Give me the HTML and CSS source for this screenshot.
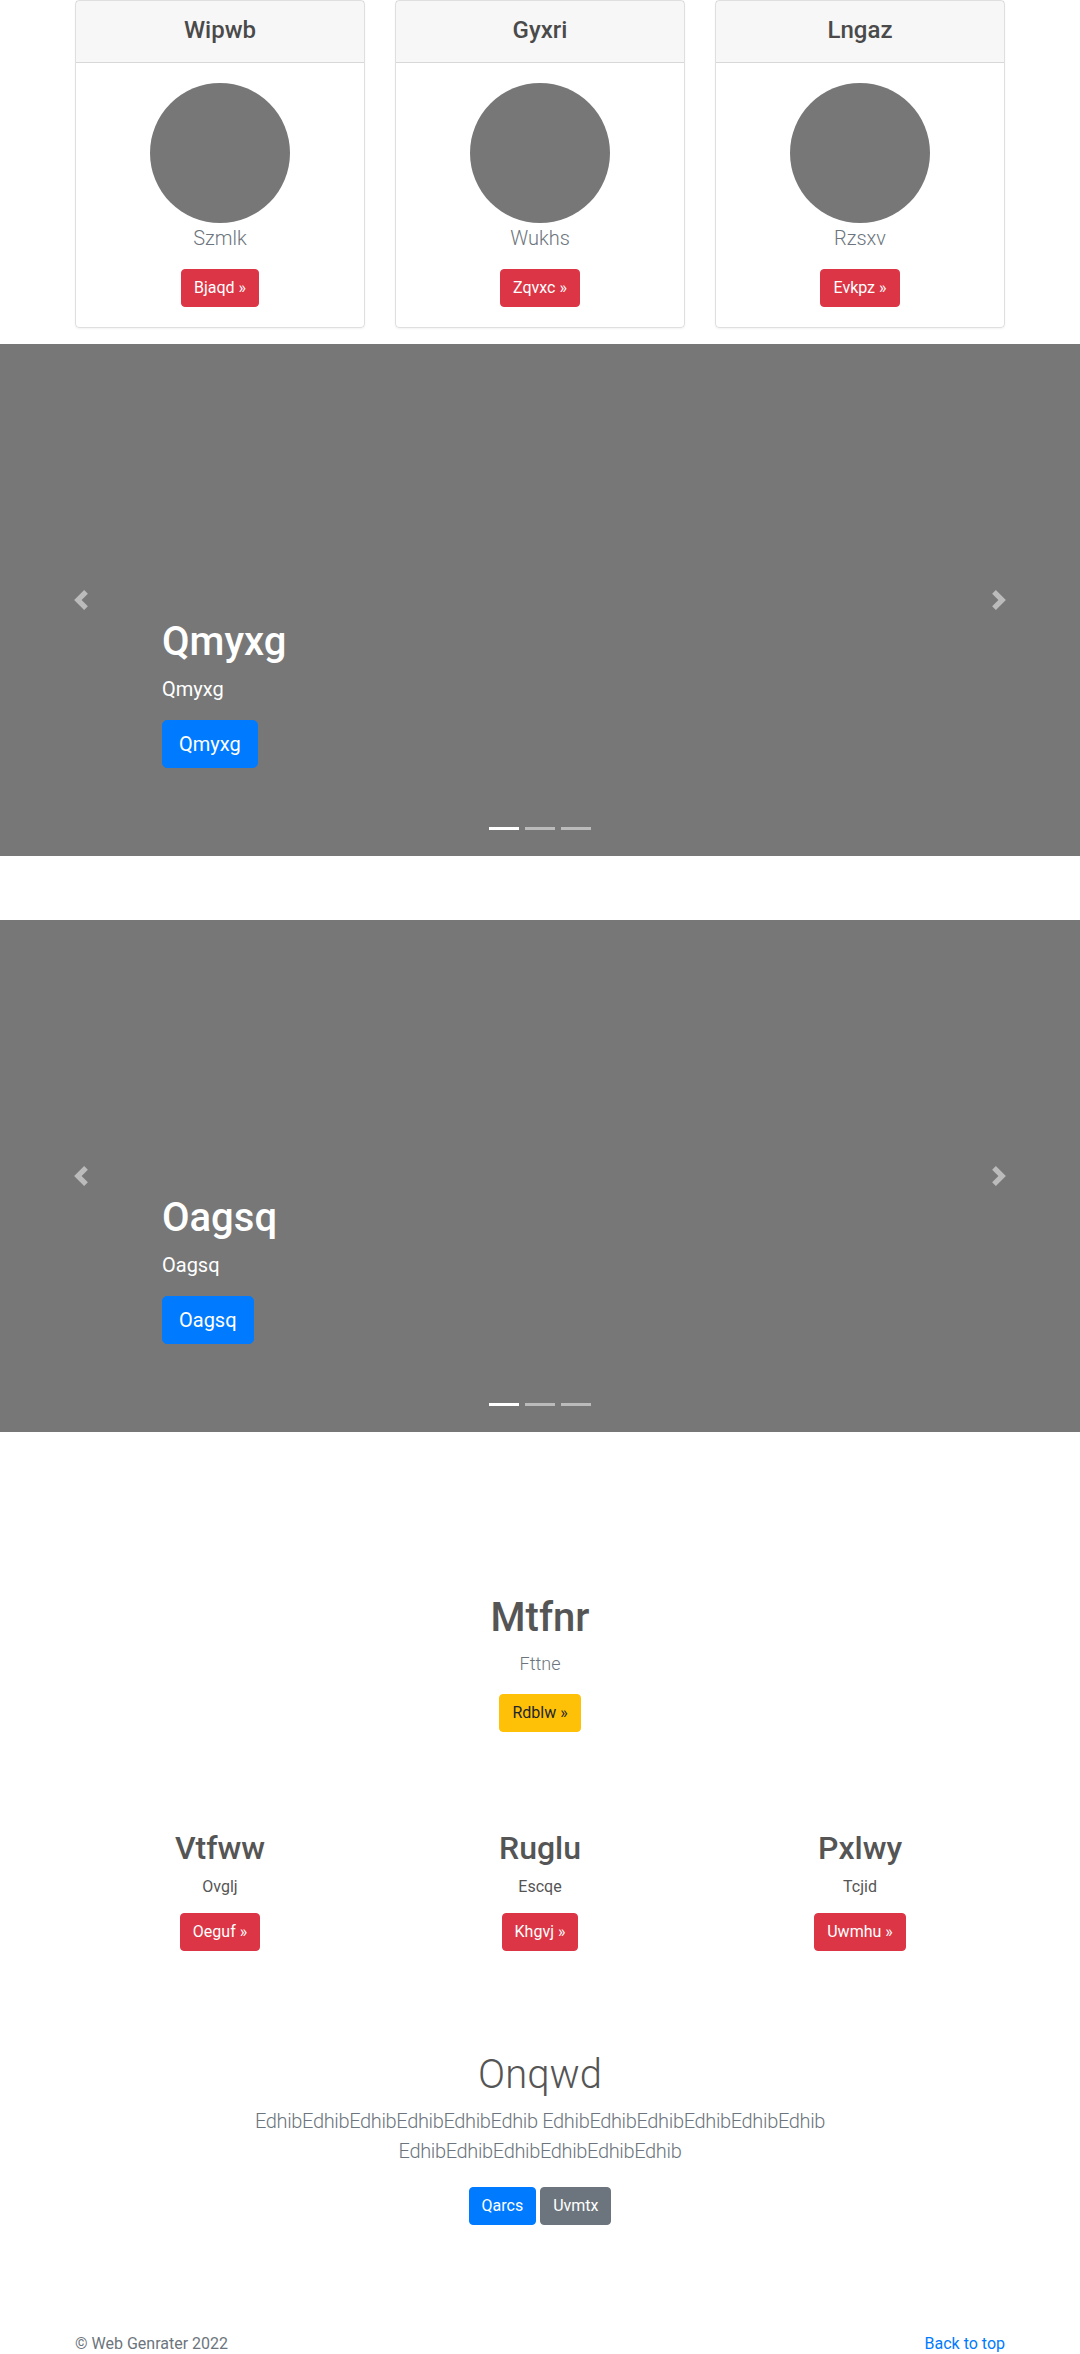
FILE: index.html
```html
<!DOCTYPE html>
<html lang="en">
<head>
<meta charset="utf-8">
<title>Page</title>
<link rel="stylesheet" href="styles.css">
</head>
<body>
<main>
  <div class="container">
    <div class="card-row">
      <div class="card">
        <div class="card-header"><h4 class="card-title">Wipwb</h4></div>
        <div class="card-body">
          <div class="avatar"></div>
          <p class="card-text">Szmlk</p>
          <a class="btn btn-danger" href="#">Bjaqd »</a>
        </div>
      </div>
      <div class="card">
        <div class="card-header"><h4 class="card-title">Gyxri</h4></div>
        <div class="card-body">
          <div class="avatar"></div>
          <p class="card-text">Wukhs</p>
          <a class="btn btn-danger" href="#">Zqvxc »</a>
        </div>
      </div>
      <div class="card">
        <div class="card-header"><h4 class="card-title">Lngaz</h4></div>
        <div class="card-body">
          <div class="avatar"></div>
          <p class="card-text">Rzsxv</p>
          <a class="btn btn-danger" href="#">Evkpz »</a>
        </div>
      </div>
    </div>
  </div>

  <section class="carousel">
    <div class="control">
      <svg viewBox="0 0 8 8" width="20" height="20"><path fill="#fff" d="M5.25 0l-4 4 4 4 1.5-1.5L4.25 4l2.5-2.5L5.25 0z"/></svg>
    </div>
    <div class="caption">
      <h1 class="caption-title">Qmyxg</h1>
      <p class="caption-text">Qmyxg</p>
      <p class="caption-action"><a class="btn btn-lg btn-primary" href="#">Qmyxg</a></p>
    </div>
    <div class="control">
      <svg viewBox="0 0 8 8" width="20" height="20"><path fill="#fff" d="M2.75 0l-1.5 1.5L3.75 4l-2.5 2.5L2.75 8l4-4-4-4z"/></svg>
    </div>
    <ol class="indicators"><li class="active"></li><li></li><li></li></ol>
  </section>

  <section class="carousel">
    <div class="control">
      <svg viewBox="0 0 8 8" width="20" height="20"><path fill="#fff" d="M5.25 0l-4 4 4 4 1.5-1.5L4.25 4l2.5-2.5L5.25 0z"/></svg>
    </div>
    <div class="caption">
      <h1 class="caption-title">Oagsq</h1>
      <p class="caption-text">Oagsq</p>
      <p class="caption-action"><a class="btn btn-lg btn-primary" href="#">Oagsq</a></p>
    </div>
    <div class="control">
      <svg viewBox="0 0 8 8" width="20" height="20"><path fill="#fff" d="M2.75 0l-1.5 1.5L3.75 4l-2.5 2.5L2.75 8l4-4-4-4z"/></svg>
    </div>
    <ol class="indicators"><li class="active"></li><li></li><li></li></ol>
  </section>

  <section class="hero">
    <h1 class="hero-title">Mtfnr</h1>
    <p class="hero-text">Fttne</p>
    <a class="btn btn-warning" href="#">Rdblw »</a>
  </section>

  <section class="container features">
    <div class="feature">
      <h2 class="feature-title">Vtfww</h2>
      <p class="feature-text">Ovglj</p>
      <a class="btn btn-danger" href="#">Oeguf »</a>
    </div>
    <div class="feature">
      <h2 class="feature-title">Ruglu</h2>
      <p class="feature-text">Escqe</p>
      <a class="btn btn-danger" href="#">Khgvj »</a>
    </div>
    <div class="feature">
      <h2 class="feature-title">Pxlwy</h2>
      <p class="feature-text">Tcjid</p>
      <a class="btn btn-danger" href="#">Uwmhu »</a>
    </div>
  </section>

  <section class="jumbo">
    <h1 class="jumbo-title">Onqwd</h1>
    <p class="jumbo-lead">EdhibEdhibEdhibEdhibEdhibEdhib EdhibEdhibEdhibEdhibEdhibEdhib EdhibEdhibEdhibEdhibEdhibEdhib</p>
    <div class="jumbo-actions">
      <a class="btn btn-primary" href="#">Qarcs</a>
      <a class="btn btn-secondary" href="#">Uvmtx</a>
    </div>
  </section>
</main>

<footer class="container footer">
  <p class="footer-copy">© Web Genrater 2022</p>
  <a class="footer-link" href="#">Back to top</a>
</footer>
</body>
</html>
```

FILE: styles.css
```css
* { box-sizing: border-box; }

body {
  margin: 0;
  font-family: Roboto, "Liberation Sans", sans-serif;
  font-size: 16px;
  line-height: 1.5;
  color: #555;
  background: #fff;
}

.container {
  width: 960px;
  margin: 0 auto;
  padding: 0 15px;
}

/* Cards */
.card-row {
  display: grid;
  grid-template-columns: repeat(3, 1fr);
  column-gap: 30px;
  padding-bottom: 16px;
}

.card {
  border: 1px solid rgba(0, 0, 0, 0.125);
  border-radius: 4px;
  text-align: center;
  box-shadow: 0 1px 2px rgba(0, 0, 0, 0.05);
}

.card-header {
  background: rgba(0, 0, 0, 0.03);
  border-bottom: 1px solid rgba(0, 0, 0, 0.125);
  padding: 15px 20px 17px;
}

.card-title {
  margin: 0;
  font-size: 24px;
  line-height: 1.2;
  font-weight: 500;
  color: #4a4a4a;
}

.card-body {
  padding: 20px;
  display: flex;
  flex-direction: column;
  align-items: center;
}

.avatar {
  width: 140px;
  height: 140px;
  border-radius: 50%;
  background: #777;
}

.card-text {
  margin: 0 0 16px;
  font-size: 20px;
  line-height: 30px;
  font-weight: 300;
  color: #6c757d;
}

/* Buttons */
.btn {
  display: inline-block;
  font-size: 16px;
  line-height: 24px;
  padding: 6px 12px;
  border: 1px solid transparent;
  border-radius: 4px;
  color: #fff;
  text-decoration: none;
  font-weight: 400;
}

.btn-lg {
  font-size: 20px;
  line-height: 30px;
  padding: 8px 16px;
  border-radius: 5px;
}

.btn-danger { background: #dc3545; border-color: #dc3545; }
.btn-primary { background: #007bff; border-color: #007bff; }
.btn-secondary { background: #6c757d; border-color: #6c757d; }
.btn-warning { background: #ffc107; border-color: #ffc107; color: #212529; }

/* Carousel */
.carousel {
  position: relative;
  height: 512px;
  background: #777;
  margin-bottom: 64px;
  display: grid;
  grid-template-columns: 15% 1fr 15%;
}

.control {
  display: flex;
  align-items: center;
  justify-content: center;
  opacity: 0.5;
}

.caption {
  align-self: end;
  padding: 20px 0 40px;
  margin-bottom: 48px;
  color: #fff;
}

.caption-title {
  margin: 0 0 8px;
  font-size: 40px;
  line-height: 1.2;
  font-weight: 500;
}

.caption-text {
  margin: 0 0 16px;
  font-size: 20px;
  line-height: 30px;
}

.caption-action {
  margin: 0;
  line-height: 0;
}

.indicators {
  position: absolute;
  left: 0;
  right: 0;
  bottom: 0;
  margin: 0 0 16px;
  padding: 0;
  list-style: none;
  display: flex;
  justify-content: center;
  gap: 6px;
}

.indicators li {
  width: 30px;
  height: 3px;
  margin: 10px 0;
  background: rgba(255, 255, 255, 0.5);
}

.indicators li.active { background: #fff; }

/* Hero */
.hero {
  padding-top: 98px;
  display: flex;
  flex-direction: column;
  align-items: center;
  text-align: center;
}

.hero-title {
  margin: 0 0 8px;
  font-size: 40px;
  line-height: 1.2;
  font-weight: 500;
  color: #555;
}

.hero-text {
  margin: 0 0 17px;
  font-size: 18px;
  line-height: 27px;
  font-weight: 300;
  color: #6c757d;
}

/* Features */
.features {
  padding-top: 97px;
  display: grid;
  grid-template-columns: repeat(3, 1fr);
  column-gap: 30px;
}

.feature {
  display: flex;
  flex-direction: column;
  align-items: center;
  text-align: center;
}

.feature-title {
  margin: 0 0 8px;
  font-size: 32px;
  line-height: 1.2;
  font-weight: 500;
  color: #555;
}

.feature-text {
  margin: 0 0 14px;
  font-size: 16px;
  line-height: 24px;
  color: #555;
}

/* Jumbotron */
.jumbo {
  padding-top: 100px;
  display: flex;
  flex-direction: column;
  align-items: center;
  text-align: center;
}

.jumbo-title {
  margin: 0 0 7px;
  font-size: 40px;
  line-height: 1.2;
  font-weight: 300;
  color: #555;
}

.jumbo-lead {
  margin: 0 0 21px;
  max-width: 640px;
  font-size: 20px;
  line-height: 30px;
  font-weight: 300;
  letter-spacing: -0.35px;
  color: #6c757d;
}

.jumbo-actions {
  display: flex;
  gap: 4px;
}

/* Footer */
.footer {
  padding-top: 107px;
  display: flex;
  justify-content: space-between;
  align-items: flex-start;
}

.footer-copy {
  margin: 0;
  color: #6c757d;
}

.footer-link {
  color: #007bff;
  text-decoration: none;
}
```
